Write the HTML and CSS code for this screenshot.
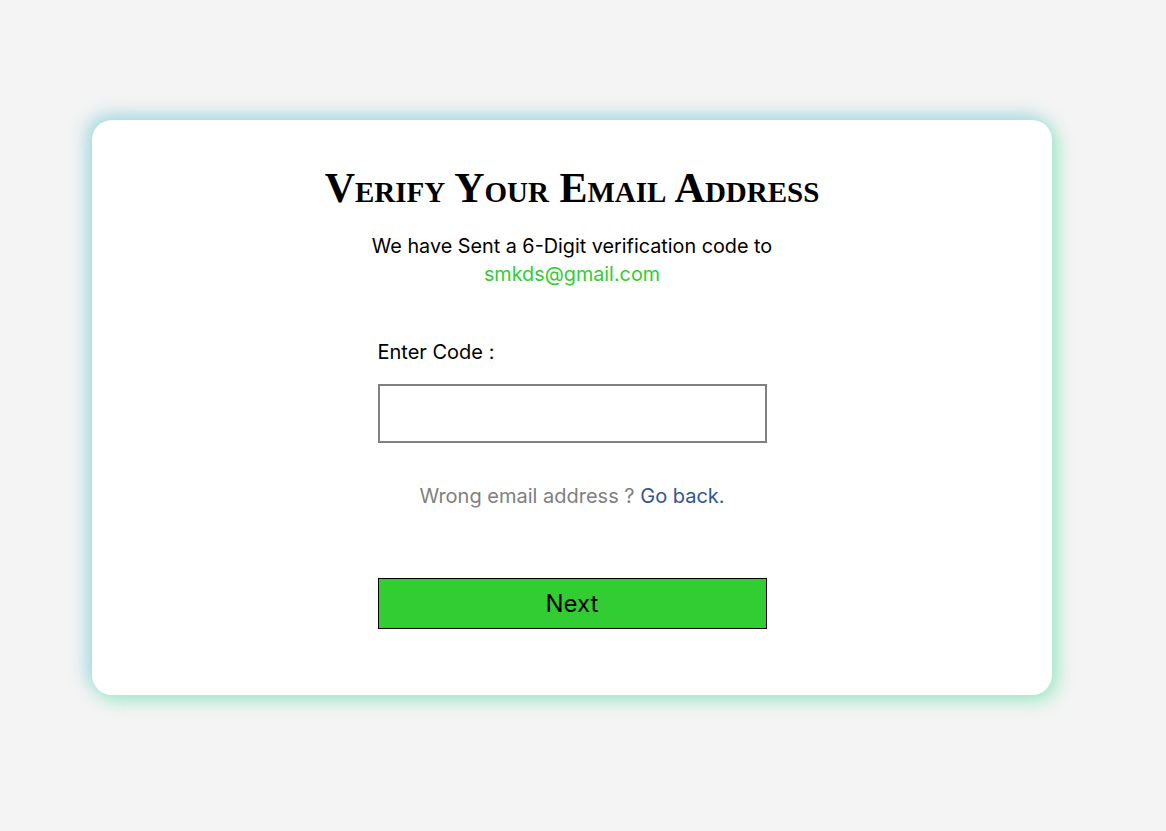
FILE: index.html
```html
<!DOCTYPE html>
<html>
<head>
<meta charset="utf-8">
<link rel="stylesheet" href="styles.css">
</head>
<body>
<div class="page">
  <div class="card">
    <h1 class="title">Verify Your Email Address</h1>
    <p class="sub">We have Sent a 6-Digit verification code to<br><span class="email">smkds@gmail.com</span></p>
    <div class="form">
      <label class="label">Enter Code :</label>
      <input class="code" type="text">
      <p class="wrong">Wrong email address ? <a class="back" href="#">Go back.</a></p>
      <button class="next">Next</button>
    </div>
  </div>
</div>
</body>
</html>
```
FILE: styles.css
```css
html, body {
  margin: 0;
  padding: 0;
  background: #f4f4f4;
}
.page {
  padding: 120px 0 120px 92px;
  min-height: 831px;
  box-sizing: border-box;
}
.card {
  width: 960px;
  height: 575px;
  box-sizing: border-box;
  background: #fff;
  border-radius: 20px;
  box-shadow: -5px -5px 18px rgba(150, 210, 225, 0.8), 5px 5px 18px rgba(140, 235, 180, 0.8);
  display: flex;
  flex-direction: column;
  align-items: center;
  font-family: Inter, "Liberation Sans", sans-serif;
  padding-top: 44px;
}
.title {
  margin: 0;
  font-family: "Liberation Serif", serif;
  font-variant: small-caps;
  font-weight: bold;
  font-size: 42px;
  line-height: 48px;
  color: #000;
}
.sub {
  margin: 20px 0 0;
  text-align: center;
  font-size: 19.8px;
  line-height: 28px;
  color: #000;
}
.email {
  color: #32cd32;
}
.form {
  width: 389px;
  display: flex;
  flex-direction: column;
  margin-top: 50px;
}
.label {
  font-size: 20px;
  line-height: 28px;
  color: #000;
}
.code {
  margin-top: 18px;
  height: 59px;
  box-sizing: border-box;
  border: 2px solid #808080;
  outline: none;
  font-size: 20px;
}
.wrong {
  margin: 39px 0 0;
  text-align: center;
  font-size: 20px;
  line-height: 28px;
  color: #808080;
}
.back {
  color: #2f5597;
  text-decoration: none;
}
.next {
  margin-top: 68px;
  height: 51px;
  background: #32cd32;
  border: 1px solid #000;
  font-family: Inter, "Liberation Sans", sans-serif;
  font-size: 24px;
  color: #000;
}
```
